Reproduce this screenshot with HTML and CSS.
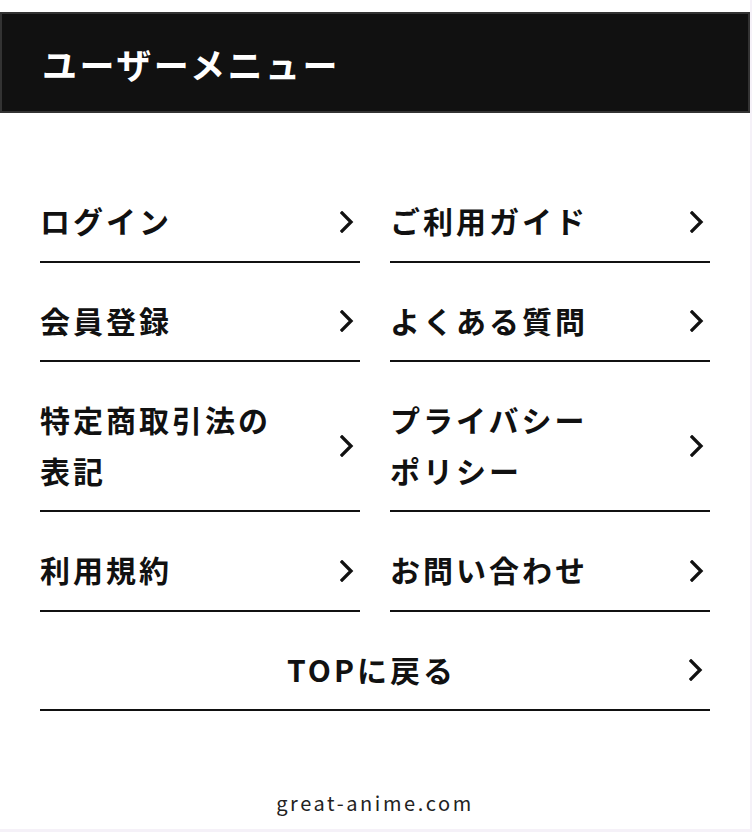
FILE: index.html
```html
<!DOCTYPE html>
<html lang="ja">
<head>
<meta charset="utf-8">
<title>ユーザーメニュー</title>
<link rel="stylesheet" href="styles.css">
</head>
<body>
<div class="page">
  <header class="menu-header">
    <h1 class="menu-title">ユーザーメニュー</h1>
  </header>
  <nav class="menu-grid">
    <a class="menu-item" href="#"><span class="menu-label">ログイン</span><svg class="chev" viewBox="0 0 14 22" width="14" height="22"><polyline points="2,2 11,11 2,20"/></svg></a>
    <a class="menu-item" href="#"><span class="menu-label">ご利用ガイド</span><svg class="chev" viewBox="0 0 14 22" width="14" height="22"><polyline points="2,2 11,11 2,20"/></svg></a>
    <a class="menu-item" href="#"><span class="menu-label">会員登録</span><svg class="chev" viewBox="0 0 14 22" width="14" height="22"><polyline points="2,2 11,11 2,20"/></svg></a>
    <a class="menu-item" href="#"><span class="menu-label">よくある質問</span><svg class="chev" viewBox="0 0 14 22" width="14" height="22"><polyline points="2,2 11,11 2,20"/></svg></a>
    <a class="menu-item" href="#"><span class="menu-label">特定商取引法の<br>表記</span><svg class="chev" viewBox="0 0 14 22" width="14" height="22"><polyline points="2,2 11,11 2,20"/></svg></a>
    <a class="menu-item" href="#"><span class="menu-label">プライバシー<br>ポリシー</span><svg class="chev" viewBox="0 0 14 22" width="14" height="22"><polyline points="2,2 11,11 2,20"/></svg></a>
    <a class="menu-item" href="#"><span class="menu-label">利用規約</span><svg class="chev" viewBox="0 0 14 22" width="14" height="22"><polyline points="2,2 11,11 2,20"/></svg></a>
    <a class="menu-item" href="#"><span class="menu-label">お問い合わせ</span><svg class="chev" viewBox="0 0 14 22" width="14" height="22"><polyline points="2,2 11,11 2,20"/></svg></a>
    <a class="menu-item menu-top" href="#"><span class="menu-label">TOPに戻る</span><svg class="chev" viewBox="0 0 14 22" width="14" height="22"><polyline points="2,2 11,11 2,20"/></svg></a>
  </nav>
  <footer class="site-footer">great-anime.com</footer>
</div>
</body>
</html>
```
FILE: styles.css
```css
html, body {
  margin: 0;
  padding: 0;
}
body {
  background: #f5f1f8;
  font-family: "Noto Sans CJK JP", "Noto Sans", sans-serif;
  color: #111;
}
.page {
  width: 750px;
  height: 829px;
  background: #fff;
  padding-top: 12px;
  box-sizing: border-box;
}
.menu-header {
  height: 101px;
  box-sizing: border-box;
  background: #111;
  border: 2px solid #333;
  display: flex;
  align-items: center;
  padding-left: 40px;
}
.menu-title {
  margin: 0;
  color: #fff;
  font-size: 35px;
  font-weight: 700;
  letter-spacing: 2.5px;
  line-height: 1;
  padding-top: 2px;
}
.menu-grid {
  margin: 50px 40px 0;
  display: grid;
  grid-template-columns: 1fr 1fr;
  column-gap: 30px;
}
.menu-item {
  display: flex;
  align-items: center;
  justify-content: space-between;
  padding: 32px 6px 15px 0;
  border-bottom: 2px solid #111;
  color: #111;
  text-decoration: none;
}
.menu-label {
  font-size: 30px;
  font-weight: 700;
  line-height: 50.5px;
  letter-spacing: 3px;
}
.chev {
  flex: none;
  margin-top: 3px;
  fill: none;
  stroke: #111;
  stroke-width: 3.3;
  stroke-linecap: square;
}
.menu-top {
  grid-column: 1 / -1;
  display: grid;
  grid-template-columns: 1fr auto 1fr;
  padding-top: 32px;
  padding-right: 7px;
}
.menu-top .menu-label {
  grid-column: 2;
}
.menu-top .chev {
  grid-column: 3;
  justify-self: end;
}
.site-footer {
  margin-top: 77px;
  text-align: center;
  font-size: 20px;
  line-height: 30px;
  letter-spacing: 2.6px;
  font-weight: 400;
  color: #222;
}
```
